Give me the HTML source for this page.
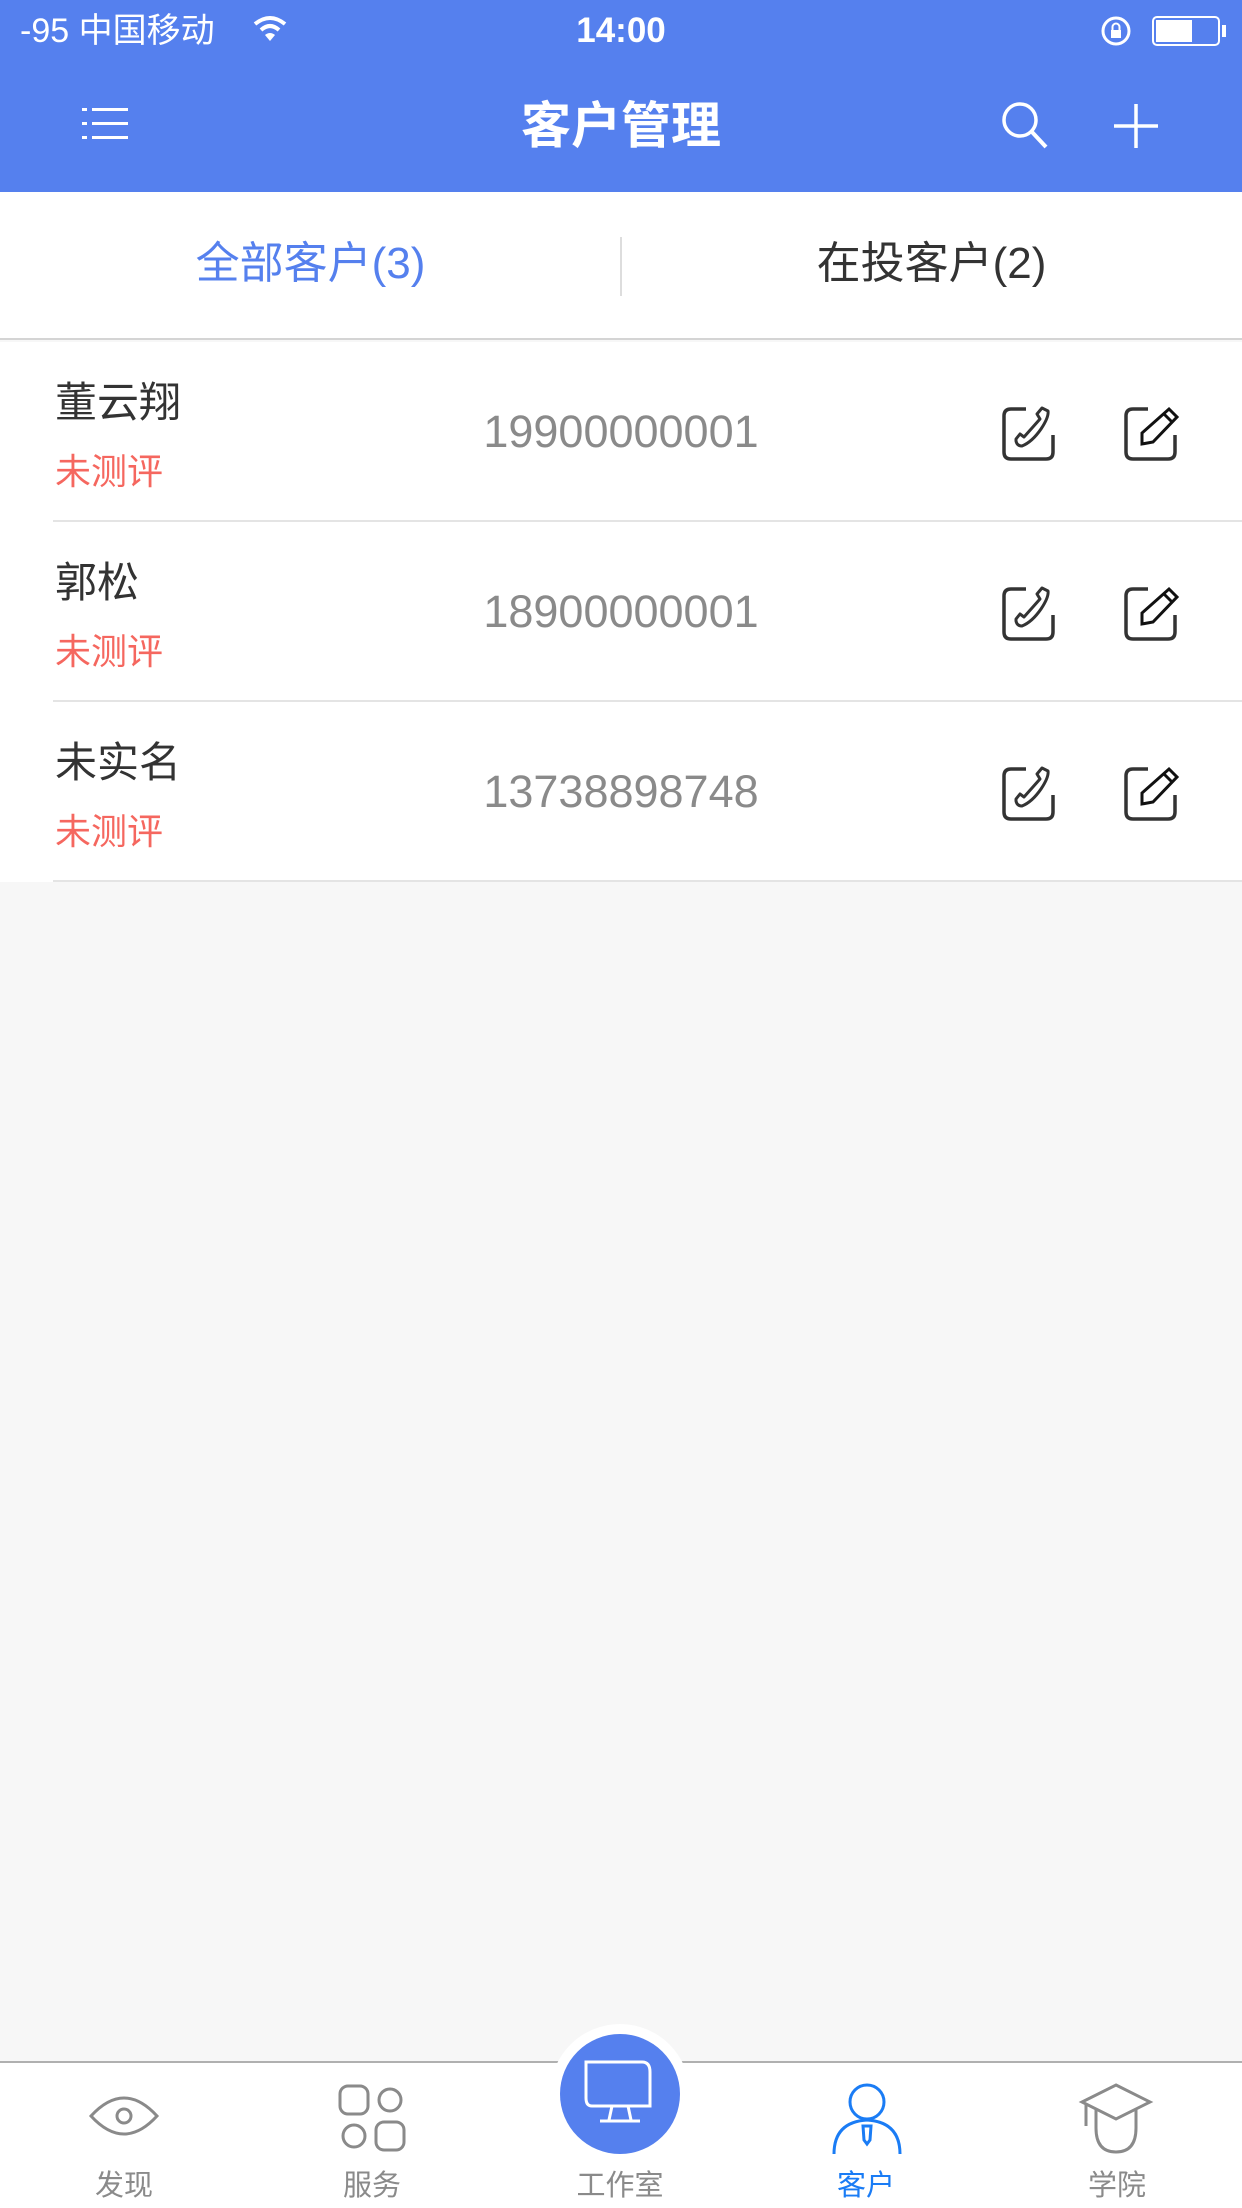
<!DOCTYPE html>
<html><head><meta charset="utf-8"><style>
*{margin:0;padding:0;box-sizing:border-box}
body{width:1242px;height:2208px;background:#f7f7f7;font-family:"Liberation Sans","Noto Sans CJK SC",sans-serif;position:relative;overflow:hidden}
.abs{position:absolute}
.hdr{left:0;top:0;width:1242px;height:192px;background:#5580ee;color:#fff}
.tabs{left:0;top:192px;width:1242px;height:148px;background:#fff;border-bottom:2px solid #d4d4d4}
.list{left:0;top:342px;width:1242px;height:540px;background:#fff}
.row{position:absolute;left:0;width:1242px;height:180px}
.sep{position:absolute;left:53px;right:0;bottom:0;height:2px;background:#e4e4e4}
.name{position:absolute;left:55px;top:36px;font-size:42px;color:#333;line-height:50px}
.st{position:absolute;left:55px;top:108px;font-size:36px;color:#f5675f;line-height:44px}
.ph{position:absolute;left:0;width:1242px;text-align:center;top:64px;font-size:45px;color:#8a8a8a;line-height:52px}
.ic{position:absolute;top:63px}
.bar{left:0;top:2061px;width:1242px;height:147px;background:#fff;border-top:2px solid #b0b0b0}
.lbl{position:absolute;top:2168px;width:160px;margin-left:-80px;text-align:center;font-size:29px;color:#8a8a8a;line-height:36px}
</style></head><body>
<div class="abs hdr">
 <div class="abs" style="left:20px;top:10px;font-size:34px;line-height:42px">-95 中国移动</div>
 <svg class="abs" style="left:252px;top:14px" width="36" height="30" viewBox="0 0 36 30"><path d="M3 10 Q18 -2 33 10" stroke="#fff" stroke-width="4" fill="none"/><path d="M9 16 Q18 8 27 16" stroke="#fff" stroke-width="4" fill="none"/><path d="M18 27 L13 21 Q18 17 23 21Z" fill="#fff"/></svg>
 <div class="abs" style="left:0;width:1242px;text-align:center;top:10px;font-size:35px;font-weight:bold;line-height:42px">14:00</div>
 <svg class="abs" style="left:1100px;top:14px" width="34" height="34" viewBox="0 0 34 34"><circle cx="16" cy="17" r="13" stroke="#fff" stroke-width="3" fill="none"/><rect x="11" y="16" width="10" height="8" fill="#fff"/><path d="M12.5 16v-3a3.5 3.5 0 0 1 7 0v3" stroke="#fff" stroke-width="2" fill="none"/></svg>
 <div class="abs" style="left:1152px;top:16px;width:68px;height:30px;border:2px solid #fff;border-radius:5px"><div style="margin:2px;width:36px;height:22px;background:#fff"></div></div>
 <div class="abs" style="left:1222px;top:25px;width:4px;height:12px;background:#fff"></div>
 <svg class="abs" style="left:82px;top:108px" width="46" height="32" viewBox="0 0 46 32"><g fill="#fff"><rect x="0" y="0" width="5" height="3"/><rect x="0" y="14" width="5" height="3"/><rect x="0" y="28" width="5" height="3"/><rect x="10" y="0" width="36" height="3"/><rect x="10" y="14" width="36" height="3"/><rect x="10" y="28" width="36" height="3"/></g></svg>
 <div class="abs" style="left:0;width:1242px;text-align:center;top:96px;font-size:50px;font-weight:bold;line-height:60px">客户管理</div>
 <svg class="abs" style="left:1000px;top:100px" width="50" height="50" viewBox="0 0 50 50"><circle cx="20" cy="20" r="16" stroke="#fff" stroke-width="3.5" fill="none"/><path d="M32 32 L46 47" stroke="#fff" stroke-width="4"/></svg>
 <svg class="abs" style="left:1112px;top:102px" width="48" height="48" viewBox="0 0 48 48"><path d="M24 2V46M2 24H46" stroke="#fff" stroke-width="3.5"/></svg>
</div>
<div class="abs tabs">
 <div class="abs" style="left:0;width:621px;text-align:center;top:44px;font-size:44px;color:#5580ee;line-height:56px">全部客户(3)</div>
 <div class="abs" style="left:620px;top:45px;width:2px;height:59px;background:#ddd"></div>
 <div class="abs" style="left:621px;width:621px;text-align:center;top:44px;font-size:44px;color:#333;line-height:56px">在投客户(2)</div>
</div>
<div class="abs list">
 <div class="row" style="top:0"><div class="name">董云翔</div><div class="st">未测评</div><div class="ph">19900000001</div>
  <svg class="ic" style="left:1000px" width="60" height="60" viewBox="0 0 60 60"><path d="M26 4H11Q4 4 4 11V47Q4 54 11 54H46Q53 54 53 47V30" stroke="#333" stroke-width="3.5" fill="none"/><path d="M16 34 L20 29 L24 32 L40 14 L37 9 L42 3 L48 6 Q49 12 41 24 Q32 37 22 41 Q17 41 16 36Z" stroke="#333" stroke-width="3" fill="none" stroke-linejoin="round"/></svg>
  <svg class="ic" style="left:1122px" width="60" height="60" viewBox="0 0 60 60"><path d="M26 4H11Q4 4 4 11V47Q4 54 11 54H46Q53 54 53 47V30" stroke="#333" stroke-width="3.5" fill="none"/><path d="M47 4 L55 12 L31 37 L20 39 L20 28Z M42 9 L50 17" stroke="#111" stroke-width="3" fill="none"/></svg>
  <div class="sep"></div></div>
 <div class="row" style="top:180px"><div class="name">郭松</div><div class="st">未测评</div><div class="ph">18900000001</div>
  <svg class="ic" style="left:1000px" width="60" height="60" viewBox="0 0 60 60"><path d="M26 4H11Q4 4 4 11V47Q4 54 11 54H46Q53 54 53 47V30" stroke="#333" stroke-width="3.5" fill="none"/><path d="M16 34 L20 29 L24 32 L40 14 L37 9 L42 3 L48 6 Q49 12 41 24 Q32 37 22 41 Q17 41 16 36Z" stroke="#333" stroke-width="3" fill="none" stroke-linejoin="round"/></svg>
  <svg class="ic" style="left:1122px" width="60" height="60" viewBox="0 0 60 60"><path d="M26 4H11Q4 4 4 11V47Q4 54 11 54H46Q53 54 53 47V30" stroke="#333" stroke-width="3.5" fill="none"/><path d="M47 4 L55 12 L31 37 L20 39 L20 28Z M42 9 L50 17" stroke="#111" stroke-width="3" fill="none"/></svg>
  <div class="sep"></div></div>
 <div class="row" style="top:360px"><div class="name">未实名</div><div class="st">未测评</div><div class="ph">13738898748</div>
  <svg class="ic" style="left:1000px" width="60" height="60" viewBox="0 0 60 60"><path d="M26 4H11Q4 4 4 11V47Q4 54 11 54H46Q53 54 53 47V30" stroke="#333" stroke-width="3.5" fill="none"/><path d="M16 34 L20 29 L24 32 L40 14 L37 9 L42 3 L48 6 Q49 12 41 24 Q32 37 22 41 Q17 41 16 36Z" stroke="#333" stroke-width="3" fill="none" stroke-linejoin="round"/></svg>
  <svg class="ic" style="left:1122px" width="60" height="60" viewBox="0 0 60 60"><path d="M26 4H11Q4 4 4 11V47Q4 54 11 54H46Q53 54 53 47V30" stroke="#333" stroke-width="3.5" fill="none"/><path d="M47 4 L55 12 L31 37 L20 39 L20 28Z M42 9 L50 17" stroke="#111" stroke-width="3" fill="none"/></svg>
  <div class="sep"></div></div>
</div>
<div class="abs bar"></div>
<div class="abs" style="left:550px;top:2024px;width:140px;height:140px;border-radius:50%;background:#fff"></div>
<div class="abs" style="left:560px;top:2034px;width:120px;height:120px;border-radius:50%;background:#5580ee"></div>
<svg class="abs" style="left:580px;top:2058px" width="80" height="70" viewBox="0 0 80 70"><path d="M6 4H62Q70 4 70 14V48H12Q6 48 6 40Z" stroke="#fff" stroke-width="3" fill="none"/><path d="M32 48L29 62M48 48L51 62M20 63H60" stroke="#fff" stroke-width="3"/></svg>
<svg class="abs" style="left:88px;top:2088px" width="72" height="56" viewBox="0 0 72 56"><path d="M3 28 Q36 -8 69 28 Q36 64 3 28Z" stroke="#8a8a8a" stroke-width="3" fill="none"/><circle cx="36" cy="28" r="7" stroke="#8a8a8a" stroke-width="3" fill="none"/></svg>
<svg class="abs" style="left:338px;top:2084px" width="68" height="68" viewBox="0 0 68 68"><g stroke="#8a8a8a" stroke-width="3" fill="none"><rect x="2" y="2" width="28" height="28" rx="8"/><circle cx="52" cy="16" r="11"/><circle cx="16" cy="52" r="11"/><rect x="38" y="38" width="28" height="28" rx="8"/></g></svg>
<svg class="abs" style="left:832px;top:2082px" width="70" height="72" viewBox="0 0 70 72"><g stroke="#1a7cf5" stroke-width="3" fill="none"><circle cx="35" cy="20" r="17"/><path d="M2 72 Q2 40 35 38 Q68 40 68 72"/><path d="M31 44H39L38 58L35 62L32 58Z"/></g></svg>
<svg class="abs" style="left:1078px;top:2082px" width="76" height="72" viewBox="0 0 76 72"><g stroke="#8a8a8a" stroke-width="3" fill="none"><path d="M38 3L72 20L38 37L4 20Z"/><path d="M18 28V46Q18 70 38 70Q58 70 58 46V28"/><path d="M8 22V44"/></g></svg>
<div class="lbl" style="left:124px">发现</div>
<div class="lbl" style="left:372px">服务</div>
<div class="lbl" style="left:620px">工作室</div>
<div class="lbl" style="left:866px;color:#1a7cf5">客户</div>
<div class="lbl" style="left:1117px">学院</div>
</body></html>
